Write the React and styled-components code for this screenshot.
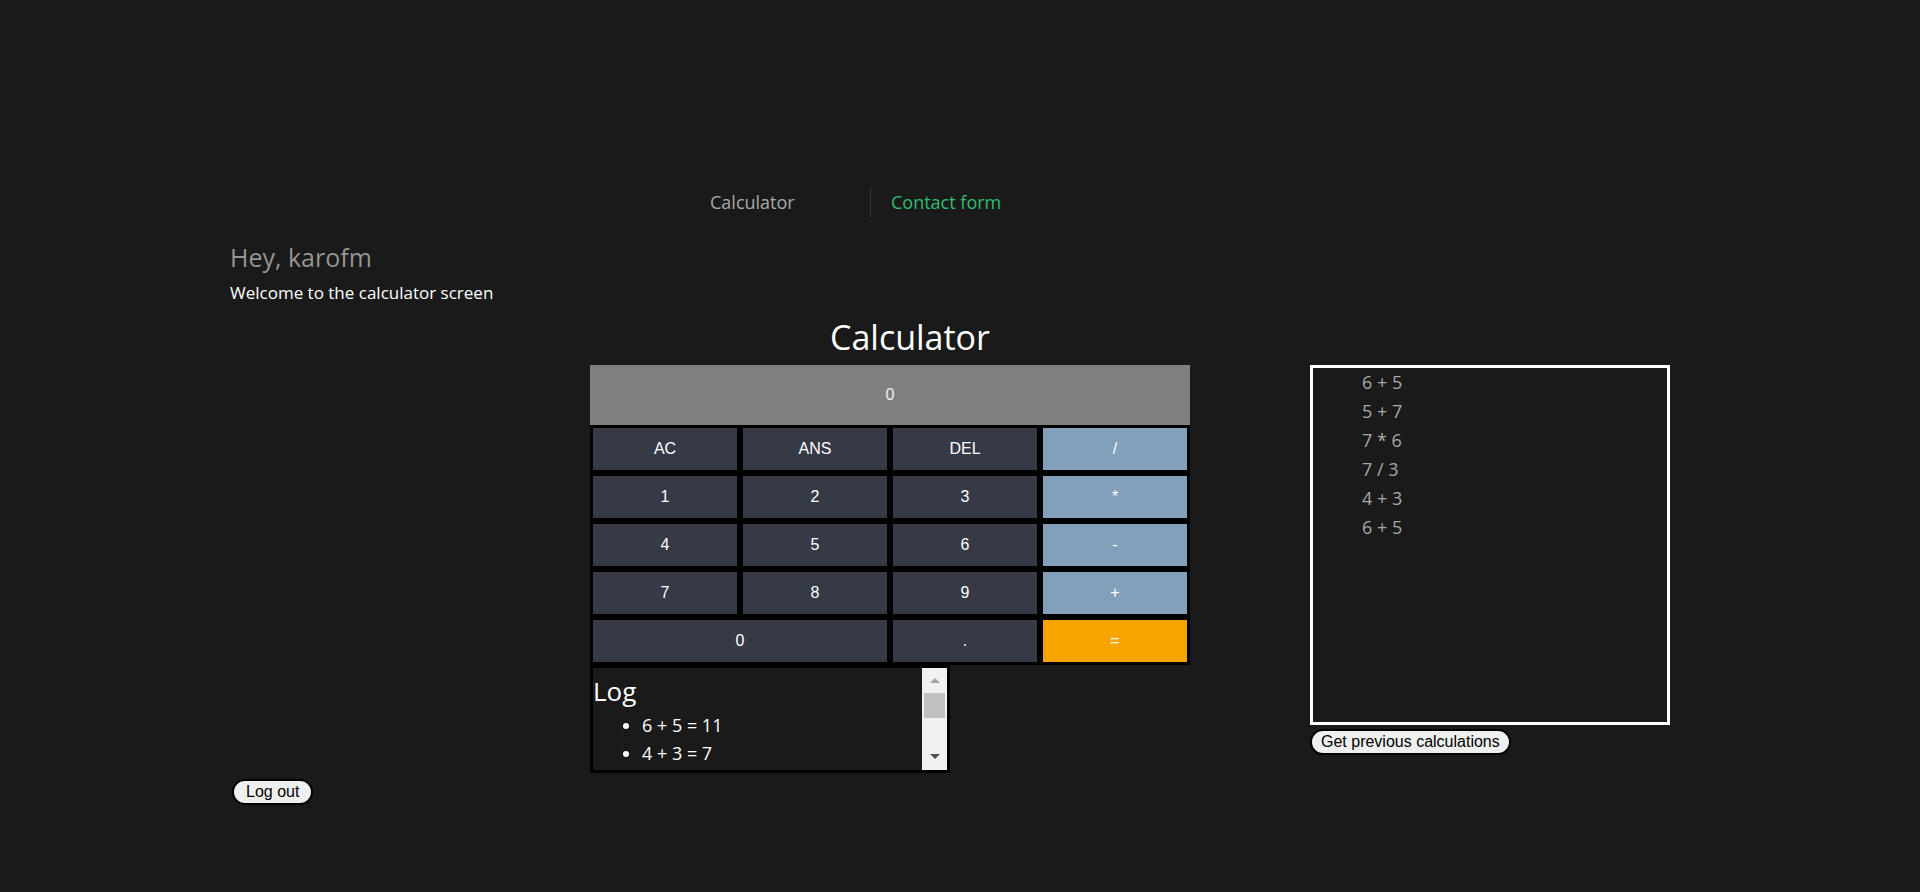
import React from 'react';
import styled, { createGlobalStyle } from 'styled-components';

const GlobalStyle = createGlobalStyle`
  html, body {
    margin: 0;
    padding: 0;
    background: #1a1a1a;
  }
  body {
    font-family: "Open Sans", "Noto Sans", sans-serif;
  }
`;

const Page = styled.div`
  min-height: 100vh;
  box-sizing: border-box;
  padding-top: 188px;
  background: #1a1a1a;
`;

// top navigation
const NavBar = styled.nav`
  width: 540px;
  margin: 0 auto;
  display: flex;
`;

const NavLink = styled.a`
  width: 180px;
  box-sizing: border-box;
  height: 29px;
  padding-left: 20px;
  font-size: 18px;
  line-height: 29px;
  text-decoration: none;
  color: ${props => (props.$active ? '#2fbd6f' : '#a9a9a9')};
  border-left: ${props => (props.$divider ? '1px solid #363636' : 'none')};
`;

const Content = styled.main`
  width: 1460px;
  margin: 0 auto;
`;

const Greeting = styled.h2`
  margin: 23px 0 0;
  font-size: 25px;
  line-height: 34px;
  font-weight: 400;
  color: #949494;
`;

const Welcome = styled.p`
  margin: 7px 0 0;
  font-size: 17px;
  line-height: 23px;
  color: #ffffff;
`;

const Workspace = styled.div`
  display: grid;
  grid-template-columns: 360px 640px 1fr;
  grid-template-rows: auto auto;
`;

const Title = styled.h1`
  grid-column: 2;
  grid-row: 1;
  margin: 10px 0 5px;
  text-align: center;
  font-size: 34px;
  line-height: 46px;
  font-weight: 400;
  color: #ffffff;
`;

// calculator
const Calculator = styled.section`
  grid-column: 2;
  grid-row: 2;
  width: 600px;
`;

const Display = styled.div`
  height: 60px;
  display: flex;
  align-items: center;
  justify-content: center;
  background: #808080;
  color: #f2f2f2;
  font: 16px "Liberation Sans", Arial, sans-serif;
`;

const Keypad = styled.div`
  display: grid;
  grid-template-columns: repeat(4, 144px);
  grid-auto-rows: 42px;
  gap: 6px;
  padding: 3px;
  background: #000000;
`;

const keyColors = {
  plain: '#363a47',
  op: '#83a0ba',
  equals: '#f6a400',
};

const Key = styled.button`
  margin: 0;
  padding: 0;
  border: 0;
  color: #ffffff;
  font: 16px "Liberation Sans", Arial, sans-serif;
  background: ${props => keyColors[props.$kind || 'plain']};
  grid-column: ${props => (props.$wide ? 'span 2' : 'auto')};
  cursor: pointer;
`;

// log panel with its (drawn) scrollbar
const LogBox = styled.div`
  width: 360px;
  height: 108px;
  box-sizing: border-box;
  border: 3px solid #000000;
  display: flex;
  color: #ffffff;
`;

const LogBody = styled.div`
  flex: 1;
  overflow: hidden;
`;

const LogTitle = styled.h2`
  margin: 5px 0 0;
  font-size: 26px;
  line-height: 36px;
  font-weight: 400;
`;

const LogList = styled.ul`
  margin: 2px 0 0;
  padding-left: 49px;
  font-size: 18px;
  line-height: 28px;
`;

const ScrollTrack = styled.div`
  width: 25px;
  display: flex;
  flex-direction: column;
  background: #f1f1f1;
`;

const ScrollArrow = styled.div`
  height: 25px;
  display: flex;
  justify-content: center;
  align-items: ${props => (props.$down ? 'flex-start' : 'flex-end')};
  box-sizing: border-box;
  padding: ${props => (props.$down ? '9px 0 0' : '0 0 10px')};

  &::before {
    content: '';
    border-left: 5px solid transparent;
    border-right: 5px solid transparent;
    border-bottom: ${props => (props.$down ? '0' : '5px solid #a3a3a3')};
    border-top: ${props => (props.$down ? '5px solid #505050' : '0')};
  }
`;

const ScrollThumb = styled.div`
  height: 25px;
  margin: 0 2px;
  background: #c1c1c1;
`;

const ScrollSpace = styled.div`
  flex: 1;
`;

// saved calculations
const HistoryColumn = styled.section`
  grid-column: 3;
  grid-row: 2;
  padding-left: 80px;
`;

const HistoryBox = styled.ul`
  width: 360px;
  height: 360px;
  box-sizing: border-box;
  margin: 0;
  padding: 0 0 0 49px;
  list-style: none;
  border: 3px solid #ffffff;
  font-size: 18px;
  line-height: 29px;
  color: #a8a8a8;
`;

const PillButton = styled.button`
  display: block;
  margin: ${props => props.$margin};
  padding: 2px ${props => props.$pad}px;
  border: 2px solid #000000;
  border-radius: 20px;
  background: #efefef;
  color: #000000;
  font: 16px "Liberation Sans", Arial, sans-serif;
  cursor: pointer;
`;

const keys = [
  { label: 'AC' },
  { label: 'ANS' },
  { label: 'DEL' },
  { label: '/', kind: 'op' },
  { label: '1' },
  { label: '2' },
  { label: '3' },
  { label: '*', kind: 'op' },
  { label: '4' },
  { label: '5' },
  { label: '6' },
  { label: '-', kind: 'op' },
  { label: '7' },
  { label: '8' },
  { label: '9' },
  { label: '+', kind: 'op' },
  { label: '0', wide: true },
  { label: '.' },
  { label: '=', kind: 'equals' },
];

const log = ['6 + 5 = 11', '4 + 3 = 7'];
const history = ['6 + 5', '5 + 7', '7 * 6', '7 / 3', '4 + 3', '6 + 5'];

export default function App() {
  return (
    <Page>
      <GlobalStyle />
      <NavBar>
        <NavLink href="#">Calculator</NavLink>
        <NavLink href="#" $active $divider>Contact form</NavLink>
      </NavBar>

      <Content>
        <Greeting>Hey, karofm</Greeting>
        <Welcome>Welcome to the calculator screen</Welcome>

        <Workspace>
          <Title>Calculator</Title>

          <Calculator>
            <Display>0</Display>
            <Keypad>
              {keys.map((k, i) => (
                <Key key={i} $kind={k.kind} $wide={k.wide}>
                  {k.label}
                </Key>
              ))}
            </Keypad>
            <LogBox>
              <LogBody>
                <LogTitle>Log</LogTitle>
                <LogList>
                  {log.map((entry, i) => (
                    <li key={i}>{entry}</li>
                  ))}
                </LogList>
              </LogBody>
              <ScrollTrack>
                <ScrollArrow />
                <ScrollThumb />
                <ScrollSpace />
                <ScrollArrow $down />
              </ScrollTrack>
            </LogBox>
          </Calculator>

          <HistoryColumn>
            <HistoryBox>
              {history.map((entry, i) => (
                <li key={i}>{entry}</li>
              ))}
            </HistoryBox>
            <PillButton $margin="4px 0 0" $pad={9}>
              Get previous calculations
            </PillButton>
          </HistoryColumn>
        </Workspace>

        <PillButton $margin="6px 0 0 2px" $pad={12}>
          Log out
        </PillButton>
      </Content>
    </Page>
  );
}
